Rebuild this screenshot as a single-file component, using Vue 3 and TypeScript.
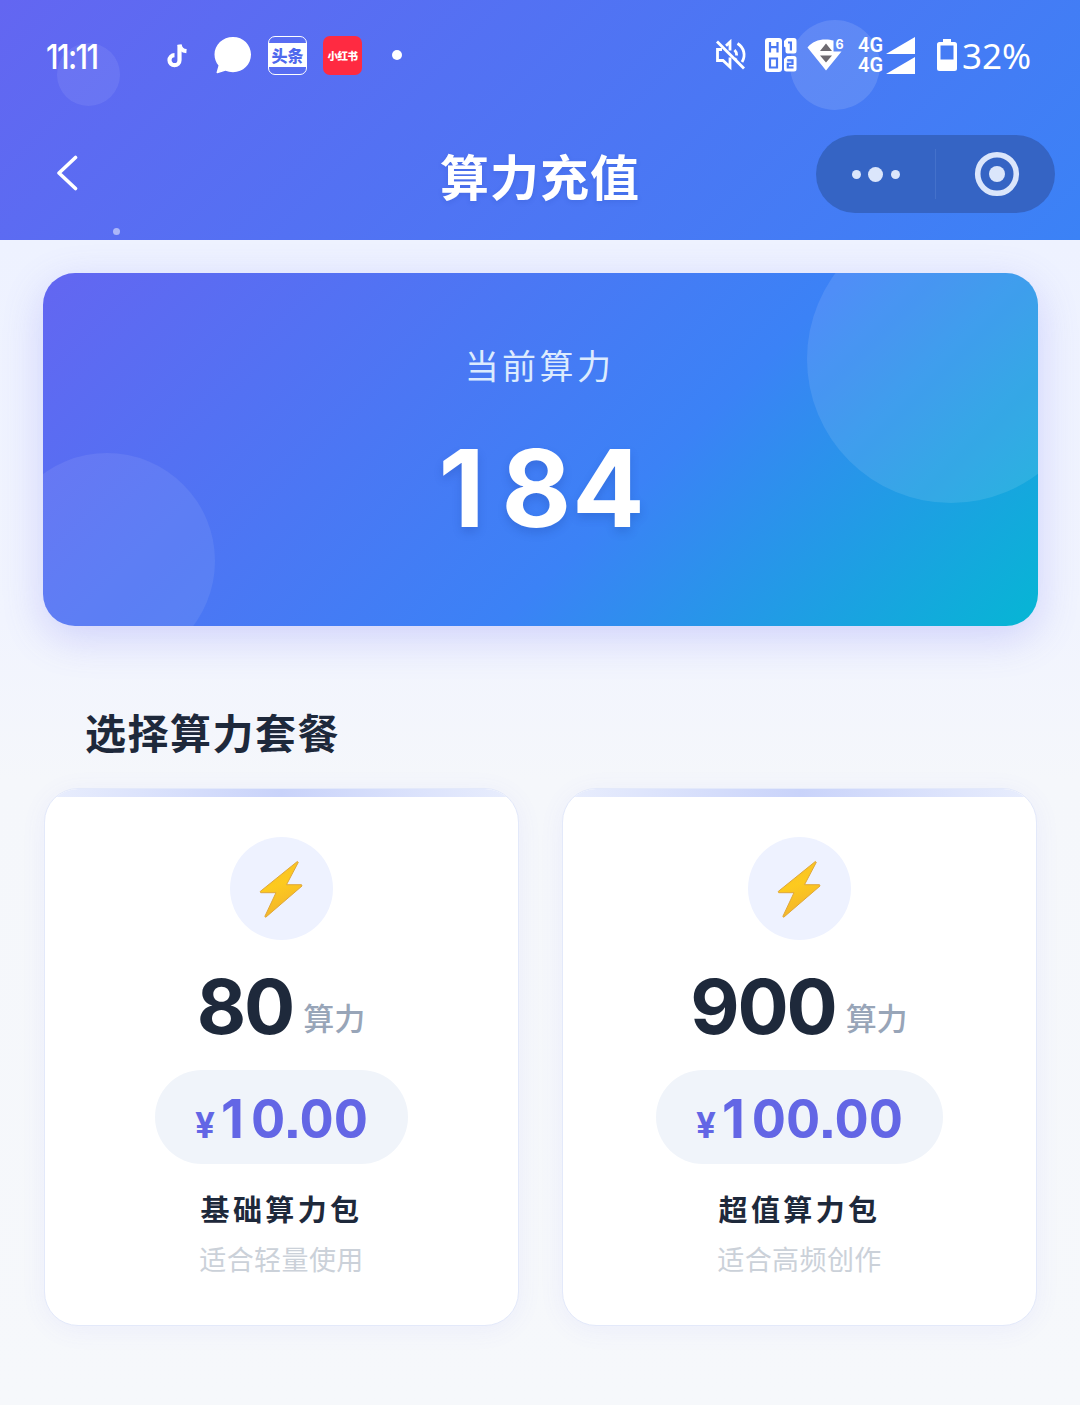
<script setup lang="ts">
interface Plan {
  amount: number
  price: string
  name: string
  hint: string
}

const balance = 184
const plans: Plan[] = [
  { amount: 80, price: '10.00', name: '基础算力包', hint: '适合轻量使用' },
  { amount: 900, price: '100.00', name: '超值算力包', hint: '适合高频创作' },
]

// Separates each "1" from its neighbours so it can be spaced like a full-width digit.
function digitRuns(value: string | number): string[] {
  return String(value).match(/1|[^1]+/g) ?? []
}
</script>

<template>
  <div class="page">
    <header class="header">
      <span class="bubble bubble-a"></span>
      <span class="bubble bubble-b"></span>
      <span class="bubble bubble-c"></span>

      <div class="status">
        <div class="clock"><span class="time">11:11</span></div>
        <svg class="ic-note" width="22" height="26" viewBox="0 0 22 26">
          <path d="M12.500 2v15.200a5 5 0 1 1-5-5" fill="none" stroke="#fff" stroke-width="4.200" />
          <path d="M12.500 1.500c.6 4 3.200 6.300 7 6.600" fill="none" stroke="#fff" stroke-width="4.200" />
        </svg>
        <svg class="ic-chat" width="38" height="38" viewBox="0 0 38 38">
          <path d="M19 1C8.800 1 .500 8.700 .500 18.500c0 4.500 1.600 8 4 11L2.500 36.500c0 .6.500.9 1 .7l8-2.400c2.300.9 4.800 1.400 7.500 1.400C29.200 36.200 37 28.300 37 18.500S29.200 1 19 1z" fill="#fff" />
        </svg>
        <span class="app toutiao"><b>头条</b></span>
        <span class="app xhs"><b>小红书</b></span>
        <span class="more-dot"></span>

        <span class="grow"></span>

        <svg class="ic-mute" width="32" height="32" viewBox="0 0 32 32" fill="none" stroke="#fff" stroke-width="2.800">
          <path d="M2 2.500 29 29.500" />
          <path d="M7 10.500H2.500v11H8l7 6.500V18.500M11 6.800 15 3v8.500" />
          <path d="M19.500 11c1.600 1.500 2.300 3.200 2.200 5.500M22.500 4.500c6.600 4 8.500 12 4.500 18.500M20 21l1.300-1.800" />
        </svg>
        <svg class="ic-hd" width="32" height="34" viewBox="0 0 32 34">
          <rect x="0" y="0" width="17" height="34" rx="3" fill="#fff" />
          <path d="M22 0h7a2.500 2.500 0 0 1 2.500 2.500V13a2.500 2.500 0 0 1-2.500 2.500h-6.500a2 2 0 0 1-2-2V9.500L19 8.500V3z" fill="#fff" />
          <path d="M22 18h7a2.500 2.500 0 0 1 2.500 2.500V31a2.500 2.500 0 0 1-2.500 2.500h-7.500A2.500 2.500 0 0 1 19 31V21z" fill="#fff" />
          <g fill="none" stroke="#4a78f3" stroke-width="2.200">
            <path d="M5 4v10.500M12.500 4v10.500M5 9.200h7.500M5 20.500h7v9H5zM23 4.500h2.900V12.500M22.200 22.300h5.300v3.500h-4.700v3.700h5.700" />
          </g>
        </svg>
        <svg class="ic-wifi" width="38" height="34" viewBox="0 0 38 34">
          <path d="M.500 9.500C5 4 11 1.500 18.500 1.500c3 0 6 .4 8 1.100V13.500h8L19 32.500z" fill="#fff" />
          <path d="m19 5.500 6 7.500H13zM13 17.500h12l-6 7z" fill="#6d6a70" />
          <text x="28.500" y="10.500" class="six">6</text>
        </svg>
        <div class="sims">
          <div v-for="n in 2" :key="n" class="sim">
            <span>4G</span>
            <svg width="29" height="17" viewBox="0 0 29 17"><path d="M0 17 29 0v17z" fill="#fff" /></svg>
          </div>
        </div>
        <svg class="ic-batt" width="20" height="32" viewBox="0 0 20 32">
          <path d="M6 0h8v3h3.500A2.500 2.500 0 0 1 20 5.500v24a2.500 2.500 0 0 1-2.500 2.500h-15A2.500 2.500 0 0 1 0 29.500v-24A2.500 2.500 0 0 1 2.500 3H6zM3.500 6.500v14h13v-14z" fill="#fff" fill-rule="evenodd" />
        </svg>
        <span class="percent">32%</span>
      </div>

      <div class="nav">
        <svg class="back" width="22" height="36" viewBox="0 0 22 36">
          <path d="M19.500 2.500 3 18l16.500 15.500" fill="none" stroke="#fff" stroke-width="3.600" stroke-linecap="round" stroke-linejoin="round" />
        </svg>
        <h1>算力充值</h1>
        <div class="capsule">
          <div class="cap-half dots"><i></i><i class="big"></i><i></i></div>
          <span class="divider"></span>
          <div class="cap-half">
            <svg width="46" height="46" viewBox="0 0 46 46">
              <circle cx="23" cy="23" r="19.300" fill="none" stroke="#dbe6fb" stroke-width="5.600" />
              <circle cx="23" cy="23" r="8" fill="#dbe6fb" />
            </svg>
          </div>
        </div>
      </div>
    </header>

    <main>
      <section class="balance">
        <span class="orb orb-right"></span>
        <span class="orb orb-left"></span>
        <div class="balance-label">当前算力</div>
        <div class="balance-value"><span v-for="(run, i) in digitRuns(balance)" :key="i" :class="{ one: run === '1' }">{{ run }}</span></div>
      </section>

      <h2>选择算力套餐</h2>

      <div class="plans">
        <article v-for="plan in plans" :key="plan.amount" class="plan">
          <div class="strip"></div>
          <div class="bolt">
            <svg width="44" height="58" viewBox="0 0 44 58">
              <defs>
                <linearGradient id="boltFill" x1="0" y1="0" x2="0.3" y2="1">
                  <stop offset="0" stop-color="#f6bd2c" />
                  <stop offset="0.500" stop-color="#fdca1e" />
                  <stop offset="1" stop-color="#f3b52c" />
                </linearGradient>
              </defs>
              <path d="M38.300 1.500 1.200 31.500l.5 1.200H17L5.800 56.500l1 .7L43 26l-.5-1.300H27.500L39.300 2.300z" fill="url(#boltFill)" stroke="#dfa73b" stroke-width="1" stroke-linejoin="round" />
            </svg>
          </div>
          <div class="amount"><strong>{{ plan.amount }}</strong><span>算力</span></div>
          <div class="price">
            <small>¥</small>
            <div class="price-value"><span v-for="(run, i) in digitRuns(plan.price)" :key="i" :class="{ one: run === '1' }">{{ run }}</span></div>
          </div>
          <div class="name">{{ plan.name }}</div>
          <div class="hint">{{ plan.hint }}</div>
        </article>
      </div>
    </main>
  </div>
</template>

<style>
body {
  margin: 0;
}
</style>

<style scoped>
.page {
  height: 1405px;
  overflow: hidden;
  background: linear-gradient(180deg, #eef2ff 0, #eef2ff 240px, #f1f4fe 620px, #f5f7fb 780px, #f6f8fb 100%);
  font-family: Inter, 'Noto Sans CJK SC', sans-serif;
}
.header {
  position: relative;
  height: 240px;
  overflow: hidden;
  background: linear-gradient(135deg, #6366f1 0%, #3b82f6 100%);
  color: #fff;
}
.bubble {
  position: absolute;
  border-radius: 50%;
  background: rgba(255, 255, 255, 0.1);
}
.bubble-a { left: 57px; top: 43px; width: 63px; height: 63px; background: rgba(255, 255, 255, 0.08); }
.bubble-b { left: 790px; top: 20px; width: 90px; height: 90px; background: rgba(255, 255, 255, 0.12); }
.bubble-c { left: 113px; top: 228px; width: 7px; height: 7px; background: rgba(255, 255, 255, 0.5); }

.status {
  position: relative;
  display: flex;
  align-items: center;
  box-sizing: border-box;
  height: 110px;
  padding: 0 49px 0 46px;
}
.grow { flex: 1; }
.clock { width: 121px; }
.time {
  display: inline-block;
  padding-top: 3px;
  font: 500 34px/40px Inter, sans-serif;
  letter-spacing: -1.800px;
  transform: scaleX(0.89);
  transform-origin: left;
}
.ic-note { margin: 2px 25px 0 0; }
.ic-chat { margin-right: 16px; }
.app {
  display: flex;
  align-items: center;
  justify-content: center;
  box-sizing: border-box;
  width: 39px;
  height: 39px;
  border-radius: 7px;
  white-space: nowrap;
  font-family: 'Noto Sans CJK SC', sans-serif;
}
.toutiao {
  border: 1.500px solid #fff;
  margin-right: 16px;
  overflow: hidden;
}
.toutiao b {
  width: 39px;
  flex: none;
  text-align: center;
  background: #fff;
  color: #4f69ed;
  font-size: 16px;
  font-weight: 900;
  line-height: 24px;
}
.xhs {
  background: #ff2a41;
  margin-right: 30px;
}
.xhs b {
  font-size: 10.500px;
  font-weight: 900;
  letter-spacing: -0.500px;
}
.more-dot {
  width: 10px;
  height: 10px;
  border-radius: 50%;
  background: #fff;
}
.ic-mute { margin-right: 18px; }
.ic-hd { margin-right: 10px; }
.ic-wifi { margin-right: 13px; }
.six { font: 700 12.500px Inter, sans-serif; fill: #fff; }
.sims {
  display: flex;
  flex-direction: column;
  gap: 2px;
  margin-right: 22px;
}
.sim {
  display: flex;
  align-items: center;
  width: 57px;
  height: 18px;
  justify-content: space-between;
  font: 600 20px/18px Roboto, sans-serif;
}
.sim svg { margin-left: -1px; flex: none; }
.ic-batt { margin-right: 5px; }
.percent {
  width: 69px;
  padding-top: 2px;
  font: 400 35px/40px 'Noto Sans', sans-serif;
  white-space: nowrap;
}

.nav {
  position: relative;
  display: grid;
  grid-template-columns: 239px 1fr 239px;
  align-items: center;
  height: 130px;
  padding: 0 25px 0 56px;
}
.back { margin-top: -5px; }
h1 {
  margin: 0 31px 0 0;
  text-align: center;
  font: 700 49px/60px 'Noto Sans CJK SC', sans-serif;
  letter-spacing: 1px;
  text-shadow: 0 2px 5px rgba(30, 60, 160, 0.15);
}
.capsule {
  justify-self: end;
  display: flex;
  align-items: center;
  width: 239px;
  height: 78px;
  margin-top: -2px;
  border-radius: 39px;
  background: #3564c4;
}
.cap-half {
  flex: 1;
  display: flex;
  align-items: center;
  justify-content: center;
}
.cap-half svg { margin-left: 3px; }
.divider { width: 1px; height: 50px; background: rgba(130, 165, 235, 0.2); }
.dots { gap: 7.500px; }
.dots i { width: 9px; height: 9px; border-radius: 50%; background: #dbe6fb; }
.dots .big { width: 15px; height: 15px; }

main { padding: 33px 42px 0 43px; }
.balance {
  position: relative;
  height: 353px;
  border-radius: 32px;
  background: linear-gradient(135deg, #6366f1 0%, #3b82f6 60%, #06b6d4 100%);
  box-shadow: 0 12px 40px rgba(99, 102, 241, 0.24);
  color: #fff;
  text-align: center;
  overflow: hidden;
}
.orb { position: absolute; border-radius: 50%; }
.orb-right { left: 764px; top: -58px; width: 288px; height: 288px; background: rgba(255, 255, 255, 0.1); }
.orb-left { left: -44px; top: 180px; width: 216px; height: 216px; background: rgba(255, 255, 255, 0.08); }
.balance-label {
  position: relative;
  margin-right: 2px;
  padding-top: 67px;
  font: 400 34px/50px 'Noto Sans CJK SC', sans-serif;
  letter-spacing: 3.400px;
  color: #dcebfe;
}
.balance-value {
  position: relative;
  margin: 33px 0 0 3px;
  font: 700 107px/130px Inter, sans-serif;
  letter-spacing: 1px;
  text-shadow: 0 5px 10px rgba(20, 50, 140, 0.2);
}
.balance-value .one { letter-spacing: 17px; }

h2 {
  margin: 75px 0 0 42px;
  font: 700 41px/60px 'Noto Sans CJK SC', sans-serif;
  letter-spacing: 1.500px;
  color: #1e293b;
}
.plans {
  display: grid;
  grid-template-columns: 1fr 1fr;
  gap: 43px;
  margin: 27px 1px 0 1px;
}
.plan {
  display: flex;
  flex-direction: column;
  align-items: center;
  box-sizing: border-box;
  height: 538px;
  border: 1px solid #e3e9fa;
  border-radius: 34px;
  background: #fff;
  box-shadow: 0 4px 26px rgba(99, 102, 241, 0.07);
  overflow: hidden;
}
.strip {
  align-self: stretch;
  height: 8px;
  background: linear-gradient(90deg, #e9eefd, #c9d3fa 50%, #e9eefd);
}
.bolt {
  display: flex;
  align-items: center;
  justify-content: center;
  width: 103px;
  height: 103px;
  margin-top: 40px;
  border-radius: 50%;
  background: #eef2ff;
}
.bolt svg { margin-right: 2px; }
.amount {
  display: flex;
  align-items: baseline;
  gap: 10px;
  margin: 20px 1px 0 0;
  line-height: 92px;
}
.amount strong {
  font: 700 76px/92px Inter, sans-serif;
  letter-spacing: -2.200px;
  color: #1e293b;
}
.amount span {
  position: relative;
  top: -4px;
  font: 500 31px/40px 'Noto Sans CJK SC', sans-serif;
  color: #98a5b8;
}
.price {
  display: flex;
  align-items: baseline;
  justify-content: center;
  box-sizing: border-box;
  height: 94px;
  margin-top: 18px;
  padding: 0 40px;
  border-radius: 47px;
  background: #f0f4fa;
  color: #6366e5;
  gap: 6px;
}
.price small { font: 700 35px/98px Inter, sans-serif; }
.price-value {
  font: 700 53px/98px Inter, sans-serif;
  font-feature-settings: 'tnum', 'ss07';
}
.price-value .one {
  font-feature-settings: normal;
  letter-spacing: 7px;
}
.name {
  margin-top: 24px;
  font: 700 29px/40px 'Noto Sans CJK SC', sans-serif;
  letter-spacing: 3.400px;
  color: #1e293b;
}
.hint {
  margin-top: 11px;
  font: 400 27px/40px 'Noto Sans CJK SC', sans-serif;
  letter-spacing: 0.400px;
  color: #cbd1d9;
}
</style>
